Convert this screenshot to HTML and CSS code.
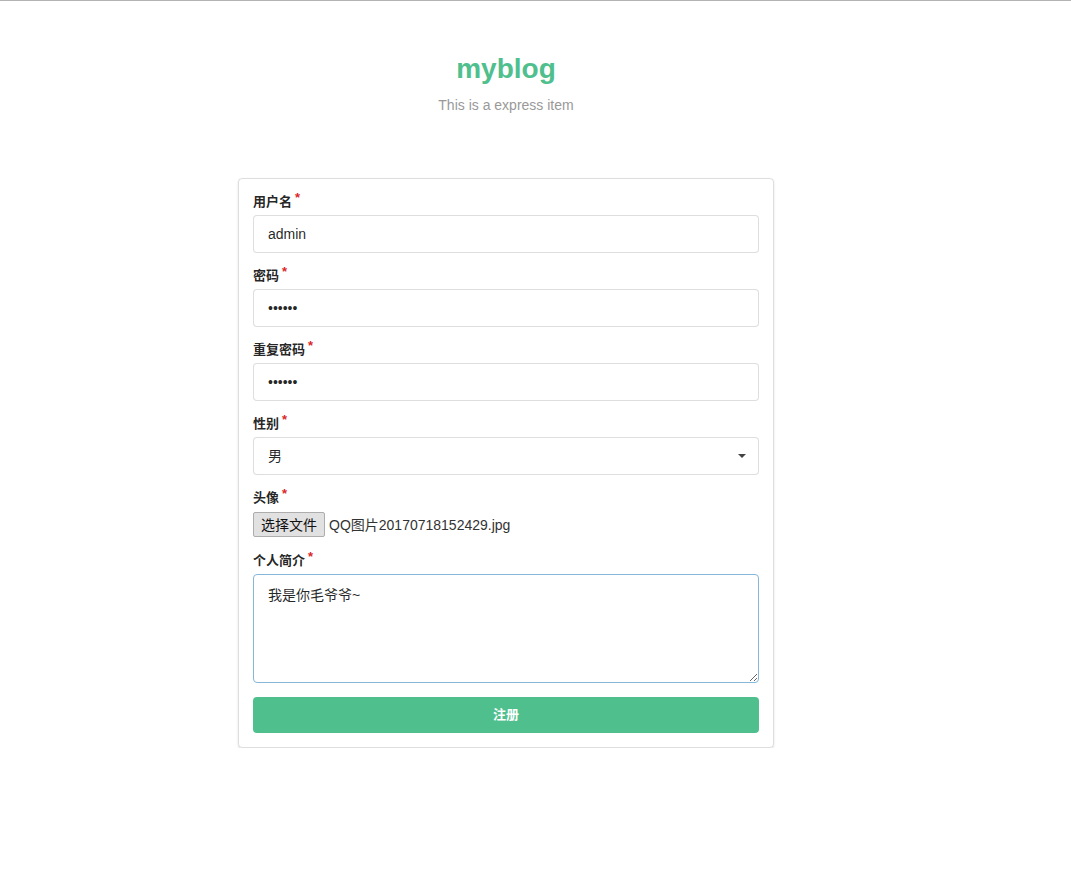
FILE: index.html
```html
<!DOCTYPE html>
<html lang="zh-CN">
<head>
<meta charset="utf-8">
<title>myblog</title>
<link rel="stylesheet" href="styles.css">
</head>
<body>
<div class="container">
  <header class="header">
    <h1 class="title">myblog</h1>
    <p class="subtitle">This is a express item</p>
  </header>
  <form class="segment">
    <div class="field">
      <label class="label">用户名</label>
      <input class="input" type="text" value="admin">
    </div>
    <div class="field">
      <label class="label">密码</label>
      <input class="input" type="password" value="123456">
    </div>
    <div class="field">
      <label class="label">重复密码</label>
      <input class="input" type="password" value="123456">
    </div>
    <div class="field">
      <label class="label">性别</label>
      <div class="select-wrap">
        <select class="input select">
          <option>男</option>
          <option>女</option>
        </select>
        <span class="caret"></span>
      </div>
    </div>
    <div class="field">
      <label class="label">头像</label>
      <div class="file">
        <span class="file-btn">选择文件</span>
        <span class="file-name">QQ图片20170718152429.jpg</span>
      </div>
    </div>
    <div class="field">
      <label class="label">个人简介</label>
      <textarea class="input textarea">我是你毛爷爷~</textarea>
    </div>
    <button class="button" type="button">注册</button>
  </form>
</div>
</body>
</html>
```

FILE: styles.css
```css
html, body {
  margin: 0;
  padding: 0;
  background: #ffffff;
}
body {
  border-top: 1px solid #b3b3b3;
  font-family: "Liberation Sans", Arial, "Noto Sans CJK SC", sans-serif;
  font-size: 14px;
  line-height: 1.4285em;
  color: rgba(0, 0, 0, 0.87);
}
.container {
  width: 536px;
  margin-left: 238px;
}
.header {
  padding-top: 50px;
  text-align: center;
}
.title {
  margin: 0;
  font-size: 28px;
  line-height: 36px;
  font-weight: bold;
  color: #4fc08d;
}
.subtitle {
  margin: 8px 0 0;
  font-size: 14px;
  line-height: 20px;
  color: #999999;
}
.segment {
  margin-top: 63px;
  border: 1px solid rgba(34, 36, 38, 0.15);
  box-shadow: 0 1px 2px 0 rgba(34, 36, 38, 0.15);
  border-radius: 4px;
  padding: 14px;
  display: flex;
  flex-direction: column;
}
.field {
  margin-bottom: 14px;
}
.label {
  display: block;
  margin: 0 0 4px;
  font-size: 13px;
  line-height: 18px;
  font-weight: bold;
  color: rgba(0, 0, 0, 0.87);
}
.label::after {
  content: "*";
  color: #db2828;
  margin-left: 3px;
  position: relative;
  top: -4px;
  font-size: 13px;
}
.input {
  display: block;
  box-sizing: border-box;
  width: 100%;
  margin: 0;
  height: 38px;
  padding: 9px 14px;
  font-family: "Liberation Sans", Arial, "Noto Sans CJK SC", sans-serif;
  font-size: 14px;
  line-height: 17px;
  color: rgba(0, 0, 0, 0.87);
  background: #ffffff;
  border: 1px solid rgba(34, 36, 38, 0.15);
  border-radius: 4px;
  outline: none;
}
.select-wrap {
  position: relative;
}
.select {
  -webkit-appearance: none;
  appearance: none;
}
.caret {
  position: absolute;
  right: 13px;
  top: 17px;
  width: 0;
  height: 0;
  border-left: 4px solid transparent;
  border-right: 4px solid transparent;
  border-top: 4px solid #444444;
}
.file {
  display: flex;
  align-items: center;
  height: 27px;
}
.file-btn {
  box-sizing: border-box;
  height: 25px;
  padding: 0 7px;
  display: flex;
  align-items: center;
  background: #e1e1e1;
  border: 1px solid #adadad;
  border-radius: 2px;
  font-size: 14px;
  color: #111111;
}
.file-name {
  margin-left: 4px;
  font-size: 14px;
  color: #333333;
}
.textarea {
  height: 109px;
  padding: 11px 14px;
  resize: vertical;
  border-color: #85b7d9;
  font-size: 14px;
  line-height: 19px;
}
.button {
  display: block;
  box-sizing: border-box;
  width: 100%;
  height: 36px;
  margin: 0;
  padding: 0 0 3px;
  border: none;
  border-radius: 4px;
  background: #4fc08d;
  color: #ffffff;
  font-family: "Liberation Sans", Arial, "Noto Sans CJK SC", sans-serif;
  font-size: 13px;
  font-weight: bold;
  cursor: pointer;
}
```
